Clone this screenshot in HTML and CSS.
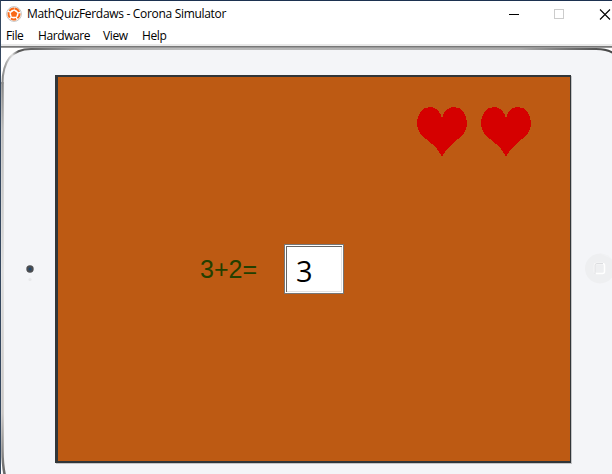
FILE: index.html
```html
<!DOCTYPE html>
<html lang="en">
<head>
<meta charset="utf-8">
<title>MathQuizFerdaws - Corona Simulator</title>
<link rel="stylesheet" href="styles.css">
</head>
<body>
<div class="window">
  <header class="titlebar">
    <svg class="logo" width="16" height="16" viewBox="0 0 16 16">
      <circle cx="8" cy="8" r="7.4" fill="#fff" stroke="#c5c5c5"/>
      <circle cx="8" cy="8" r="5.500" fill="#fff" stroke="#f96816" stroke-width="2" stroke-dasharray="5.600 1.312" transform="rotate(-82 8 8)"/>
      <path d="M8 4.700 11.300 7 10.200 10.800H5.800L4.700 7Z" fill="#f96816"/>
    </svg>
    <h1 class="title">MathQuizFerdaws - Corona Simulator</h1>
    <svg class="controls" width="104" height="24" viewBox="0 0 104 24" fill="none" shape-rendering="crispEdges">
      <path d="M1 14.500H11" stroke="#000"/>
      <rect x="46.500" y="9.500" width="9" height="9" stroke="#ccc"/>
      <path d="M92 9.500 102 19.500M102 9.500 92 19.500" stroke="#000" stroke-width="1.100" shape-rendering="auto"/>
    </svg>
  </header>
  <nav class="menu">
    <span class="file">File</span><span class="hardware">Hardware</span><span class="view">View</span><span class="help">Help</span>
  </nav>
  <main class="device">
    <svg class="bezel" width="611" height="428" viewBox="1 46 611 428" fill="none">
      <defs>
        <linearGradient id="top" x1="0" x2="612" y1="0" y2="0" gradientUnits="userSpaceOnUse">
          <stop offset="0" stop-color="#777"/><stop offset=".02" stop-color="#ddd"/><stop offset=".03" stop-color="#555"/><stop offset=".14" stop-color="#aaa"/><stop offset=".3" stop-color="#bbb"/><stop offset=".85" stop-color="#aaa"/><stop offset="1" stop-color="#444"/>
        </linearGradient>
        <linearGradient id="side" x1="0" x2="0" y1="70" y2="474" gradientUnits="userSpaceOnUse">
          <stop offset="0" stop-color="#777"/><stop offset=".15" stop-color="#bbb"/><stop offset=".5" stop-color="#ddd"/><stop offset=".85" stop-color="#c8c5c3"/><stop offset="1" stop-color="#666"/>
        </linearGradient>
      </defs>
      <path d="M2 480V82Q2 48 31 48H596Q606 48 612 52V480Z" fill="#f4f5f8"/>
      <path d="M6 480Q2.500 468 2.500 450V82" stroke="url(#side)" stroke-width="2.500"/>
      <path d="M2.500 84C2.500 61 12 49 31 49H596Q607 49 613 53" stroke="url(#top)" stroke-width="2"/>
      <path d="M1 46.500H612" stroke="#777"/>
      <path d="M1 47.500H612" stroke="#999"/>
      <circle cx="30" cy="269" r="3.700" fill="#4b4d51"/>
      <circle cx="30" cy="269" r="1.500" fill="#20486f"/>
      <circle cx="30" cy="279.500" r="1.600" fill="#e8e9eb"/>
      <circle cx="600" cy="268.500" r="15" fill="#eeeff1"/>
      <path d="M600 253.500A15 15 0 0 1 612 277.500V259Z" fill="#f1f2f4"/>
      <rect x="594.500" y="263.500" width="10" height="10" rx="2" stroke="#fff" stroke-width="1.500"/>
      <path d="M595 274V265Q595 263.500 597 263.500H603" stroke="#dcdde0"/>
    </svg>
    <section class="screen">
      <div class="lives">
        <svg class="heart" width="50" height="50" viewBox="0 0 50 50"><path d="M25 11C27 4 31 0 37 0 45 0 50 7 50 16 50 23 47 28 41 32L35 37 30 42 25.500 49H24.500L20 42 15 37 9 32C3 28 0 23 0 16 0 7 5 0 13 0 19 0 23 4 25 11Z" fill="#d50000" shape-rendering="crispEdges"/></svg>
        <svg class="heart" width="50" height="50" viewBox="0 0 50 50"><path d="M25 11C27 4 31 0 37 0 45 0 50 7 50 16 50 23 47 28 41 32L35 37 30 42 25.500 49H24.500L20 42 15 37 9 32C3 28 0 23 0 16 0 7 5 0 13 0 19 0 23 4 25 11Z" fill="#d50000" shape-rendering="crispEdges"/></svg>
      </div>
      <div class="quiz">
        <span class="question">3+2=</span>
        <div class="answer"><span>3</span></div>
      </div>
    </section>
  </main>
</div>
</body>
</html>
```
FILE: styles.css
```css
* { box-sizing: border-box; }
body { margin: 0; overflow: hidden; }
.window {
  width: 612px;
  height: 474px;
  overflow: hidden;
  background: #fff;
  border-top: 1px solid #1c3150;
  border-left: 1px solid #34475f;
  font-family: "Open Sans", "Noto Sans", sans-serif;
  color: #000;
}
.titlebar {
  display: flex;
  height: 25px;
  padding-left: 5px;
}
.logo { margin-top: 5px; }
.title {
  margin: 0 0 0 5px;
  width: 481px;
  font-size: 12px;
  font-weight: 400;
  line-height: 26px;
  white-space: nowrap;
  letter-spacing: -0.31px;
}
.controls { flex: none; margin-top: -1px; }
.menu {
  display: flex;
  height: 20px;
  padding-left: 5px;
  border-bottom: 2px solid #e8e8e8;
  font-size: 12px;
  line-height: 20px;
  letter-spacing: -0.4px;
}
.file { width: 32px; }
.hardware { width: 65px; }
.view { width: 39px; }
.device {
  position: relative;
  height: 428px;
  padding: 29px 0 0 54px;
}
.bezel { position: absolute; left: 0; top: 0; }
.screen {
  position: relative;
  width: 516px;
  height: 388px;
  background: #bd5a13;
  border: 2px solid #323639;
  border-left-width: 3px;
  border-right-width: 1px;
  box-shadow: 1px 1px 0 #c4c5c7;
}
.lives {
  display: flex;
  justify-content: flex-end;
  gap: 14px;
  padding: 30px 39px 0 0;
}
.heart { display: block; }
.quiz {
  display: flex;
  padding: 87px 0 0 142px;
}
.question {
  width: 84px;
  font: 25px/50px "Liberation Sans", Arial, sans-serif;
  color: #233f00;
}
.answer {
  width: 60px;
  height: 50px;
  padding-left: 11px;
  background: #fff;
  border: 1px solid #777;
  box-shadow: inset 0 0 0 1px #fff, inset 2px 2px 0 #666, inset -2px -2px 0 #e3e3e3;
  font-size: 29px;
  line-height: 51px;
}
```
